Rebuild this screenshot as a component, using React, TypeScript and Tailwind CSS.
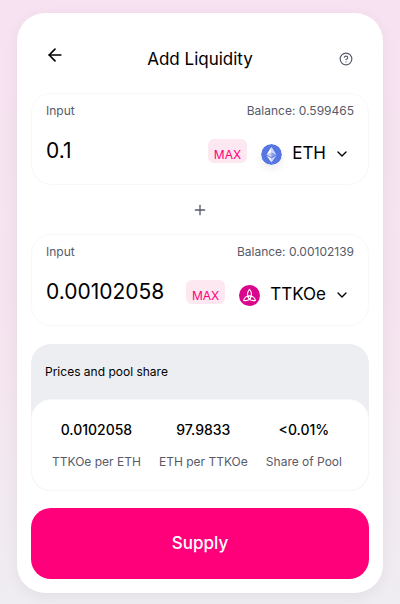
import { useState } from 'react'
import { ArrowLeft, ChevronDown, CircleHelp, Plus } from 'lucide-react'

function EthLogo() {
  return (
    <svg viewBox="0 0 32 32" className="h-[21px] w-[21px] shrink-0 rounded-full shadow-[0_4px_8px_rgba(0,0,0,0.08)]" aria-hidden="true">
      <circle cx="16" cy="16" r="16" fill="#5676e4" />
      <path d="M16 4v8.9l7.5 3.3z" fill="#fff" fillOpacity=".7" />
      <path d="M16 4L8.5 16.2l7.5-3.3z" fill="#fff" />
      <path d="M16 22v6l7.5-10.4z" fill="#fff" fillOpacity=".7" />
      <path d="M16 28v-6l-7.5-4.4z" fill="#fff" />
      <path d="M16 20.6l7.5-4.4-7.5-3.3z" fill="#fff" fillOpacity=".3" />
      <path d="M8.5 16.2l7.5 4.4v-7.7z" fill="#fff" fillOpacity=".65" />
    </svg>
  )
}

function TtkoeLogo() {
  return (
    <svg viewBox="0 0 32 32" className="h-[21px] w-[21px] shrink-0" aria-hidden="true">
      <circle cx="16" cy="16" r="16" fill="#d9078c" />
      <g fill="none" stroke="#fff" strokeWidth="1.7" strokeLinejoin="round">
        <path d="M16 6.5c-4 5-4 10.500 0 15.500c4-5 4-10.500 0-15.500z" />
        <path d="M7 23.500c1.500-5.500 6-7.500 11.500-6.500c-1 5-5.500 7.500-11.500 6.500z" />
        <path d="M25 23.500c-1.500-5.500-6-7.500-11.500-6.500c1 5 5.500 7.500 11.500 6.500z" />
      </g>
    </svg>
  )
}

function CurrencyInput({ id, value, onChange, balance, symbol }: { id: string, value: string, onChange: (value: string) => void, balance: string, symbol: string }) {
  return (
    <div className="h-[92px] rounded-[20px] border border-[#f7f8fa] px-3.5 pt-[7px]">
      <div className="flex justify-between text-xs leading-5 text-[#565a69]">
        <label htmlFor={id}>Input</label>
        <span>Balance: {balance}</span>
      </div>
      <div className="mt-3 flex items-center pr-1">
        <input
          id={id}
          inputMode="decimal"
          value={value}
          onChange={(e) => onChange(e.target.value)}
          className="h-10 min-w-0 flex-1 bg-transparent pb-1.5 text-[21px] outline-none"
        />
        <button type="button" onClick={() => onChange(balance)} className="mb-1 h-6 rounded-md bg-[#fde8f1] px-1.5 pt-2 text-xs leading-4 text-[#ff007a]">
          MAX
        </button>
        <div className="ml-3.5 flex items-center pt-0.5">
          {symbol === 'ETH' ? <EthLogo /> : <TtkoeLogo />}
          <select aria-label={`${symbol} token`} defaultValue={symbol} className="ml-2.5 appearance-none bg-transparent text-[17px] [field-sizing:content] outline-none">
            <option>{symbol}</option>
          </select>
          <ChevronDown className="pointer-events-none ml-2 h-4 w-4" />
        </div>
      </div>
    </div>
  )
}

const stats = [
  { value: '0.0102058', label: 'TTKOe per ETH' },
  { value: '97.9833', label: 'ETH per TTKOe' },
  { value: '<0.01%', label: 'Share of Pool' },
]

export default function App() {
  const [eth, setEth] = useState('0.1')
  const [token, setToken] = useState('0.00102058')

  return (
    <div className="min-h-screen bg-linear-to-b from-[#f7e2f1] via-[#f5e5ef] via-60% to-[#efedf2] px-[17px] pt-[13px] pb-[11px] font-['Inter',sans-serif] text-black">
      <main className="mx-auto max-w-md rounded-[28px] bg-white px-3.5 pb-3.5 shadow-[0_4px_16px_rgba(0,0,0,0.06)]">
        <header className="flex h-20 items-center justify-between pt-3 pr-3 pl-3.5">
          <button type="button" aria-label="Back" className="pb-2">
            <ArrowLeft className="h-5 w-5" />
          </button>
          <h1 className="pt-0.5 text-[17px]">Add Liquidity</h1>
          <button type="button" aria-label="Help" className="px-1 text-[#565a69]">
            <CircleHelp className="h-3.5 w-3.5" />
          </button>
        </header>

        <CurrencyInput id="eth-amount" value={eth} onChange={setEth} balance="0.599465" symbol="ETH" />
        <div className="flex h-[49px] items-center justify-center text-[#565a69]">
          <Plus className="h-4 w-4" />
        </div>
        <CurrencyInput id="token-amount" value={token} onChange={setToken} balance="0.00102139" symbol="TTKOe" />

        {/* Prices */}
        <section className="mt-[18px] rounded-[20px] bg-[#edeef2]">
          <h2 className="px-3.5 pt-[18px] pb-[17px] text-xs leading-5">Prices and pool share</h2>
          <dl className="flex h-[92px] items-center justify-between rounded-[20px] border border-[#f7f8fa] bg-white pt-0.5 pr-[26px] pl-5 text-center">
            {stats.map((s) => (
              <div key={s.label} className="flex flex-col-reverse gap-3">
                <dt className="text-xs leading-5 text-[#565a69]">{s.label}</dt>
                <dd className="text-sm leading-5 font-medium">{s.value}</dd>
              </div>
            ))}
          </dl>
        </section>

        <button type="button" className="mt-[17px] h-[71px] w-full rounded-[20px] bg-[#ff007a] text-[17px] font-medium text-white">
          Supply
        </button>
      </main>
    </div>
  )
}
